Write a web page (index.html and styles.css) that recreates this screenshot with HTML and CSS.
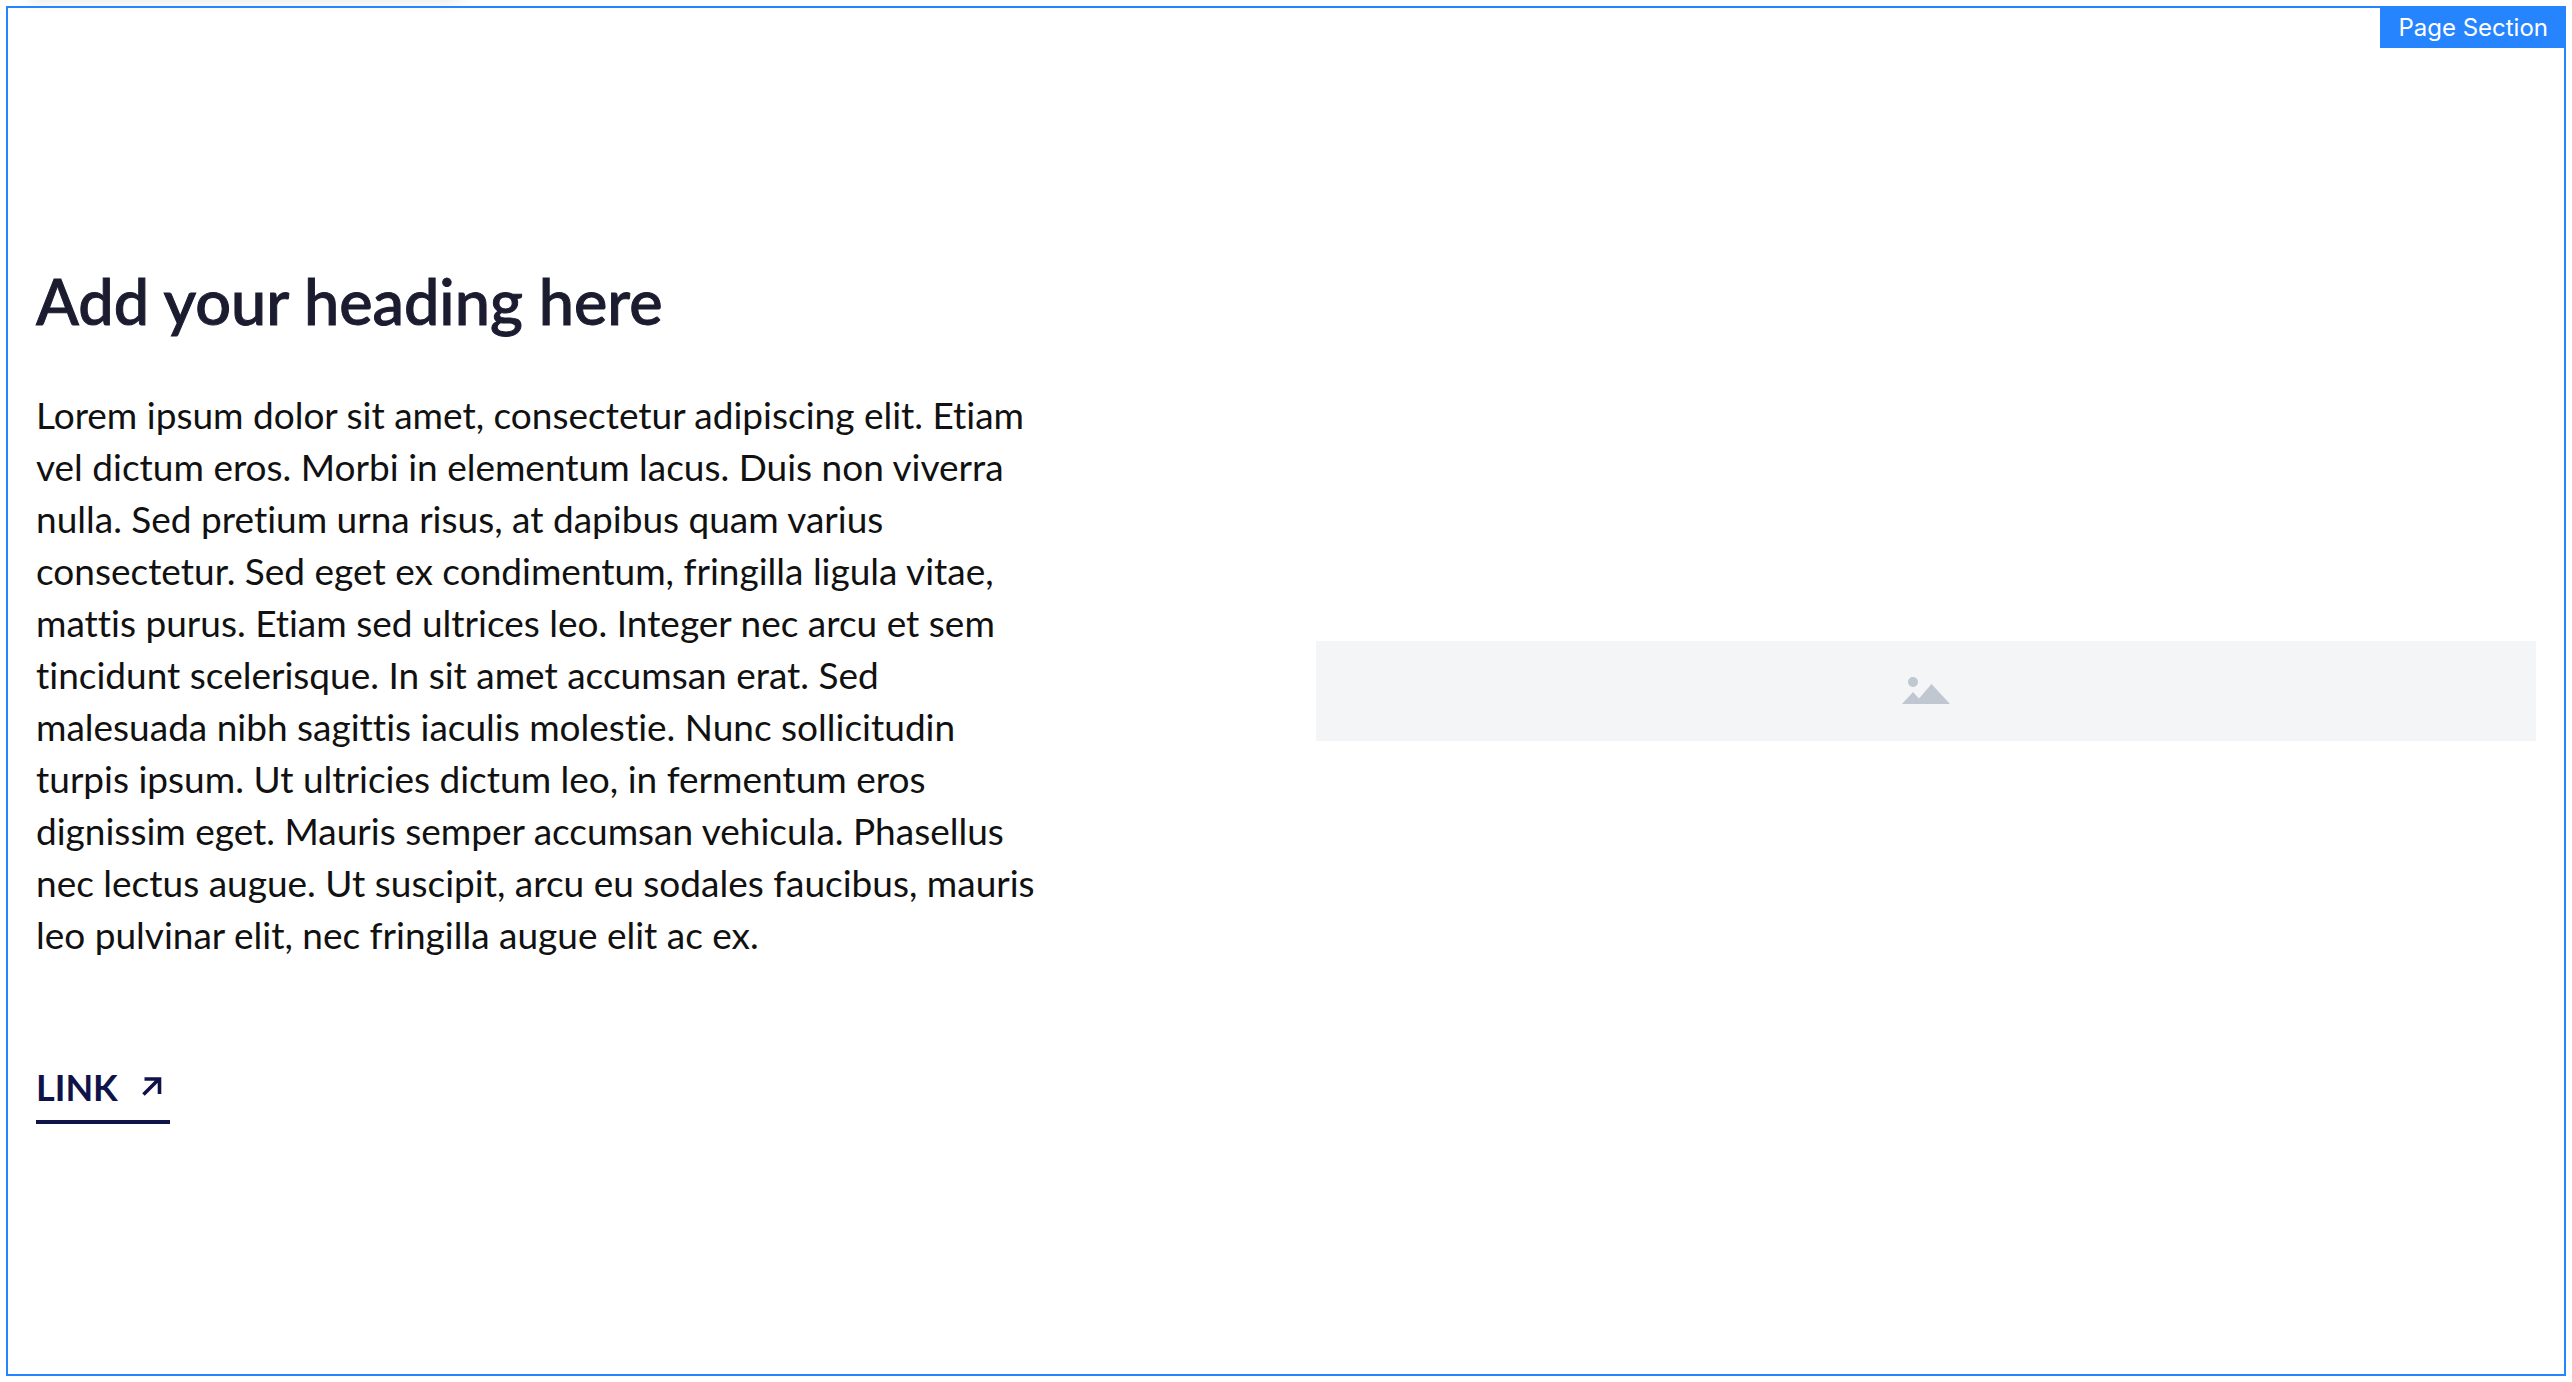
FILE: index.html
```html
<!DOCTYPE html>
<html lang="en">
<head>
<meta charset="utf-8">
<meta name="viewport" content="width=device-width, initial-scale=1">
<title>Page Section</title>
<link rel="stylesheet" href="styles.css">
</head>
<body>
<div class="toolbar-shadow"></div>
<section class="page-section">
  <span class="section-tag">Page Section</span>
  <div class="copy">
    <h2 class="heading">Add your heading here</h2>
    <p class="text">Lorem ipsum dolor sit amet, consectetur adipiscing elit. Etiam<br>
    vel dictum eros. Morbi in elementum lacus. Duis non viverra<br>
    nulla. Sed pretium urna risus, at dapibus quam varius<br>
    consectetur. Sed eget ex condimentum, fringilla ligula vitae,<br>
    mattis purus. Etiam sed ultrices leo. Integer nec arcu et sem<br>
    tincidunt scelerisque. In sit amet accumsan erat. Sed<br>
    malesuada nibh sagittis iaculis molestie. Nunc sollicitudin<br>
    turpis ipsum. Ut ultricies dictum leo, in fermentum eros<br>
    dignissim eget. Mauris semper accumsan vehicula. Phasellus<br>
    nec lectus augue. Ut suscipit, arcu eu sodales faucibus, mauris<br>
    leo pulvinar elit, nec fringilla augue elit ac ex.</p>
    <a class="link" href="#">LINK
      <svg class="arrow" width="20" height="20" viewBox="0 0 20 20" aria-hidden="true"><path d="M1.500 17.500 17 2M2.500 2H17.500V17" fill="none" stroke="currentColor" stroke-width="3.600"/></svg>
    </a>
  </div>
  <div class="placeholder">
    <svg width="48" height="28" viewBox="0 0 48 28" aria-hidden="true"><path d="M0 27 11 15 17 21.500 29.500 7 48 27Z" fill="#c1c7d0"/><circle cx="11" cy="5" r="5" fill="#c1c7d0"/></svg>
  </div>
</section>
</body>
</html>
```
FILE: styles.css
```css
* { box-sizing: border-box; }
body {
  margin: 0;
  padding: 6px;
  min-height: 100vh;
  display: flex;
  background: #fff;
  font-family: Lato, sans-serif;
  font-variant-ligatures: none;
}
.page-section {
  position: relative;
  flex: 1;
  display: grid;
  grid-template-columns: 1fr 1fr;
  gap: 60px;
  align-items: center;
  padding: 28px;
  border: 2px solid #2684ff;
}
/* soft edge of the toolbar that sits above the section */
.toolbar-shadow {
  position: absolute;
  top: -20px;
  left: 30px;
  width: 430px;
  height: 20px;
  box-shadow: 0 0 16px rgba(9, 30, 66, 0.12);
}
.section-tag {
  position: absolute;
  top: -2px;
  right: -2px;
  padding: 2px 18px 0;
  background: #2684ff;
  color: #fff;
  font: 400 24px/40px Inter, sans-serif;
}
.copy {
  display: flex;
  flex-direction: column;
  align-items: flex-start;
}
.heading {
  margin: 0 0 46px;
  color: #1c1c30;
  font-size: 63px;
  font-weight: 500;
  line-height: 84px;
  -webkit-text-stroke: 1px #1c1c30;
}
.text {
  margin: 0 0 100px;
  color: #111;
  font-size: 37px;
  line-height: 52px;
  white-space: nowrap;
}
.link {
  display: flex;
  align-items: center;
  gap: 24px;
  padding: 0 8px 7px 0;
  border-bottom: 4px solid #0f1349;
  color: #0f1349;
  font-size: 36px;
  font-weight: 700;
  line-height: 52px;
  text-decoration: none;
}
.placeholder {
  display: flex;
  align-items: center;
  justify-content: center;
  height: 100px;
  background: #f4f5f7;
}
```
